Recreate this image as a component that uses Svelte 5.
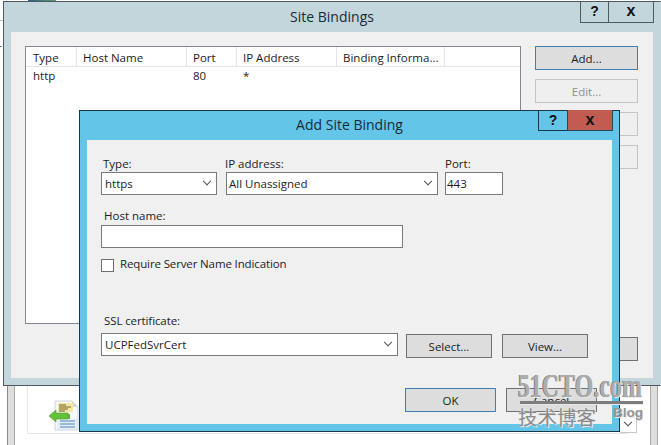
<script>
	const columns = [
		{ label: 'Type', width: 50 },
		{ label: 'Host Name', width: 110 },
		{ label: 'Port', width: 50 },
		{ label: 'IP Address', width: 100 },
		{ label: 'Binding Informa...', width: 108 }
	];
</script>

<div class="desktop">
	<div class="backdrop">
		<div class="behind-title">Or more text in the list below</div>
		<div class="behind-image"></div>
		<div class="behind-line"></div>
		<div class="behind-letter">r</div>
		<div class="side-left"></div>
		<div class="side-right"></div>
		<div class="behind-panel">
			<svg class="doc-icon" width="32" height="32" viewBox="0 0 32 32">
				<path d="M7 1h17l6 6v23H7z" fill="#f6f8fa" stroke="#cfd3d8" />
				<path d="M24 1v6h6z" fill="#d5d8dc" />
				<rect x="10" y="3" width="15" height="9" fill="#f3e9a4" />
				<path d="M11 5h7M11 7h12M11 9h9M11 11h6" stroke="#6e5f24" stroke-width="1" />
				<rect x="9" y="19" width="20" height="10" fill="#e3eff8" />
				<path d="M12 21h15M12 24h15M12 27h15" stroke="#4f86b3" stroke-width="1" />
				<path d="M18 14v5M21 14v5" stroke="#3f8d24" stroke-width="1.5" />
				<path d="M1 16l7-6v3h12v6H8v3z" fill="#63c23a" stroke="#4a9a2a" stroke-width="0.6" />
			</svg>
		</div>
	</div>

	<section class="window site-bindings">
		<header class="title site-title">
			<span class="caption">Site Bindings</span>
			<div class="controls">
				<span class="ctl help">?</span>
				<span class="ctl close">x</span>
			</div>
		</header>
		<div class="client site-client">
			<div class="list">
				<div class="list-head">
					{#each columns as col}
						<span class="col" style="width: {col.width}px">{col.label}</span>
					{/each}
				</div>
				<div class="list-row">
					<span style="width: 160px">http</span>
					<span style="width: 50px">80</span>
					<span>*</span>
				</div>
			</div>
			<div class="side-buttons">
				<button class="btn focused">Add...</button>
				<button class="btn disabled">Edit...</button>
				<button class="btn disabled"></button>
				<button class="btn disabled"></button>
				<button class="btn site-close"></button>
			</div>
		</div>
	</section>

	<section class="window add-binding">
		<header class="title add-title">
			<span class="caption">Add Site Binding</span>
			<div class="controls">
				<span class="ctl help active">?</span>
				<span class="ctl close red">x</span>
			</div>
		</header>
		<div class="client add-client">
			<div class="row-one">
				<div class="field">
					<span class="label">Type:</span>
					<div class="select type-select">https<i class="chev"></i></div>
				</div>
				<div class="field flush">
					<span class="label ip-label">IP address:</span>
					<div class="select ip-select">All Unassigned<i class="chev"></i></div>
				</div>
				<div class="field flush">
					<span class="label">Port:</span>
					<div class="select port-input">443</div>
				</div>
			</div>
			<div class="field host">
				<span class="label">Host name:</span>
				<div class="select host-input"></div>
			</div>
			<div class="check-row">
				<span class="checkbox"></span>
				<span class="check-text">Require Server Name Indication</span>
			</div>
			<div class="field ssl">
				<span class="label">SSL certificate:</span>
				<div class="ssl-row">
					<div class="select ssl-select">UCPFedSvrCert<i class="chev"></i></div>
					<button class="btn plain select-btn">Select...</button>
					<button class="btn plain view-btn">View...</button>
				</div>
			</div>
			<div class="footer">
				<button class="btn focused ok">OK</button>
				<button class="btn plain cancel">Cancel</button>
			</div>
		</div>
	</section>

	<div class="behind-arrow"><i class="chev"></i></div>

	<div class="watermark">
		<div class="wm-top">51CTO.com</div>
		<div class="wm-rule"></div>
		<div class="wm-bottom">
			<span class="wm-cn">技术博客</span>
			<span class="wm-blog">Blog</span>
		</div>
	</div>
</div>

<style>
	:global(body) {
		margin: 0;
		background: #fff;
	}

	.desktop {
		position: relative;
		width: 661px;
		height: 445px;
		overflow: hidden;
		font-family: 'Open Sans', 'Noto Sans', sans-serif;
		font-size: 11.5px;
		color: #1c1c1c;
		background: #fff;
	}

	.backdrop {
		position: absolute;
		inset: 0;
	}

	.behind-title {
		position: absolute;
		left: 78px;
		top: -15px;
		font-size: 14px;
		letter-spacing: 0.4px;
		color: #222;
	}

	.behind-image {
		position: absolute;
		left: 28px;
		top: 0;
		width: 28px;
		height: 2px;
		background: linear-gradient(90deg, #2c5f8d, #5f9a70);
	}

	.behind-line {
		position: absolute;
		left: 0;
		top: 20px;
		width: 4px;
		height: 1px;
		background: #bdbdbd;
	}

	.behind-letter {
		position: absolute;
		left: -3px;
		top: 40px;
		color: #333;
	}

	.side-left,
	.side-right {
		position: absolute;
		box-sizing: border-box;
		top: 385px;
		width: 8px;
		height: 60px;
		background: #dedede;
		border-left: 1px solid #8c8c8c;
		border-right: 1px solid #a8a8a8;
	}

	.side-left {
		left: 7px;
	}

	.side-right {
		left: 650px;
		border-left-color: #a8a8a8;
	}

	.behind-panel {
		position: absolute;
		left: 27px;
		top: 385px;
		width: 600px;
		height: 48px;
		border-left: 1px solid #e6e6e6;
		border-bottom: 1px solid #e6e6e6;
	}

	.doc-icon {
		position: absolute;
		left: 20px;
		top: 15px;
	}

	.window {
		position: absolute;
		box-sizing: border-box;
		border: 1px solid #4c5a62;
		display: flex;
		flex-direction: column;
	}

	.site-bindings {
		left: 3px;
		top: 1px;
		width: 658px;
		height: 385px;
		background: #c3d6dc;
		padding: 0 7px 7px 7px;
		border-right-color: #c3d6dc;
	}

	.add-binding {
		left: 79px;
		top: 110px;
		width: 541px;
		height: 322px;
		background: #63c6e8;
		padding: 0 7px 7px 7px;
		border-color: #17384a;
	}

	.title {
		display: flex;
		justify-content: center;
		align-items: center;
		position: relative;
		flex: none;
	}

	.site-title {
		height: 30px;
	}

	.add-title {
		height: 29px;
	}

	.caption {
		font-size: 14px;
		color: #1a2a33;
		padding-bottom: 2px;
	}

	.controls {
		position: absolute;
		top: -1px;
		right: -1px;
		display: flex;
	}

	.ctl {
		box-sizing: border-box;
		height: 22px;
		display: flex;
		align-items: center;
		justify-content: center;
		font-family: 'Liberation Sans', sans-serif;
		font-weight: 700;
		color: #111;
		border: 1px solid #4c5a62;
		border-top: none;
	}

	.ctl.help {
		width: 28px;
		border-right: none;
		font-size: 14px;
		padding-bottom: 1px;
	}

	.ctl.close {
		width: 46px;
		font-size: 16px;
		padding-bottom: 1px;
	}

	.ctl.active {
		width: 29px;
		border-color: #17384a;
		border-right: none;
		height: 21px;
	}

	.ctl.red {
		background: #c25b52;
		border-color: #22485a;
		height: 21px;
	}

	.client {
		flex: 1;
		box-sizing: border-box;
		background: #f0f0f0;
		min-height: 0;
	}

	.site-client {
		display: flex;
		padding: 14px 15px 0 14px;
		gap: 14px;
	}

	.list {
		box-sizing: border-box;
		width: 496px;
		height: 278px;
		background: #fff;
		border: 1px solid #828790;
	}

	.list-head {
		display: flex;
		height: 19px;
		border-bottom: 1px solid #e5e5e5;
		padding-left: 1px;
	}

	.col {
		box-sizing: border-box;
		padding-left: 6px;
		padding-top: 1px;
		line-height: 19px;
		border-right: 1px solid #e5e5e5;
	}

	.list-row {
		display: flex;
		padding-left: 7px;
		line-height: 18px;
	}

	.side-buttons {
		display: flex;
		flex-direction: column;
		width: 103px;
		gap: 9px;
	}

	.btn {
		box-sizing: border-box;
		height: 24px;
		width: 103px;
		padding: 0;
		font: inherit;
		color: inherit;
		background: #dddddd;
		border: 1px solid #707070;
		border-radius: 0;
	}

	.btn.focused {
		border-color: #3c7fb1;
	}

	.btn.disabled {
		background: #efefef;
		border-color: #c4c4c4;
		color: #8f8f8f;
	}

	.site-close {
		margin-top: 159px;
	}

	.add-client {
		padding: 15px 0 0 14px;
	}

	.row-one {
		display: flex;
		gap: 9px;
	}

	.field {
		display: flex;
		flex-direction: column;
	}

	.label {
		line-height: 17px;
		padding-left: 2px;
	}

	.flush .label {
		padding-left: 0;
	}

	.flush .ip-label {
		margin-left: -1px;
	}

	.select {
		box-sizing: border-box;
		height: 23px;
		display: flex;
		align-items: center;
		justify-content: space-between;
		padding: 0 6px 0 3px;
		background: #fff;
		border: 1px solid #7a7a7a;
		position: relative;
	}

	.type-select {
		width: 116px;
	}

	.ip-select {
		width: 212px;
		padding-left: 2px;
	}

	.port-input {
		width: 58px;
		padding-left: 1px;
	}

	.row-one .field:last-child {
		margin-left: -2px;
	}

	.host {
		margin-top: 12px;
	}

	.host .label,
	.ssl .label {
		padding-left: 3px;
		padding-bottom: 1px;
	}

	.host-input {
		width: 302px;
	}

	.check-row {
		display: flex;
		align-items: center;
		gap: 6px;
		margin-top: 10px;
		height: 14px;
	}

	.check-text {
		letter-spacing: -0.13px;
		padding-bottom: 4px;
	}

	.checkbox {
		box-sizing: border-box;
		width: 13px;
		height: 13px;
		background: #fff;
		border: 1px solid #707070;
	}

	.ssl {
		margin-top: 40px;
	}

	.ssl .label {
		padding-bottom: 4px;
		letter-spacing: -0.1px;
	}

	.ssl-row {
		display: flex;
		align-items: flex-start;
	}

	.ssl-select {
		width: 297px;
	}

	.select-btn {
		width: 86px;
		margin-left: 8px;
		margin-top: 1px;
	}

	.view-btn {
		width: 86px;
		margin-left: 10px;
		margin-top: 1px;
	}

	.footer {
		display: flex;
		gap: 10px;
		margin-top: 30px;
		margin-left: 304px;
	}

	.ok,
	.cancel {
		width: 91px;
	}

	.chev {
		width: 5px;
		height: 5px;
		border-right: 1.5px solid #505050;
		border-bottom: 1.5px solid #505050;
		transform: rotate(45deg) translate(-2px, -2px);
	}

	.behind-arrow {
		position: absolute;
		box-sizing: border-box;
		left: 620px;
		top: 414px;
		width: 17px;
		height: 19px;
		background: #fff;
		border: 1px solid #c8c8c8;
		border-top: none;
		border-left: none;
		padding: 3px 0 0 5px;
		display: flex;
		align-items: center;
	}

	.watermark {
		position: absolute;
		left: 518px;
		top: 373px;
		width: 125px;
		color: #8f8f8f;
	}

	.wm-top {
		width: 125px;
		font-family: 'Liberation Serif', serif;
		font-weight: 700;
		font-size: 34px;
		line-height: 26px;
		white-space: nowrap;
		color: #adadad;
		text-shadow: -1px 0 0 #6f6f6f, 1px 1px 0 #e9e9e9;
		transform: scaleX(0.705);
		transform-origin: left center;
	}

	.wm-rule {
		height: 3px;
		margin: 2px 0 0 2px;
		background: #7d7d7d;
		box-shadow: 0 1px 0 #e8e8e8;
	}

	.wm-bottom {
		display: flex;
		justify-content: space-between;
		align-items: flex-start;
		margin-top: 1px;
	}

	.wm-cn {
		font-family: 'Noto Sans CJK SC', sans-serif;
		font-size: 19.5px;
		line-height: 24px;
		color: #8a8a8a;
		text-shadow: 0 0 2px #f4f4f4, 1px 1px 0 #e4e4e4;
	}

	.wm-blog {
		font-family: 'Liberation Sans', sans-serif;
		font-weight: 700;
		font-size: 13.5px;
		line-height: 15px;
		color: #949494;
		text-shadow: 1px 1px 0 #e4e4e4;
	}
</style>
